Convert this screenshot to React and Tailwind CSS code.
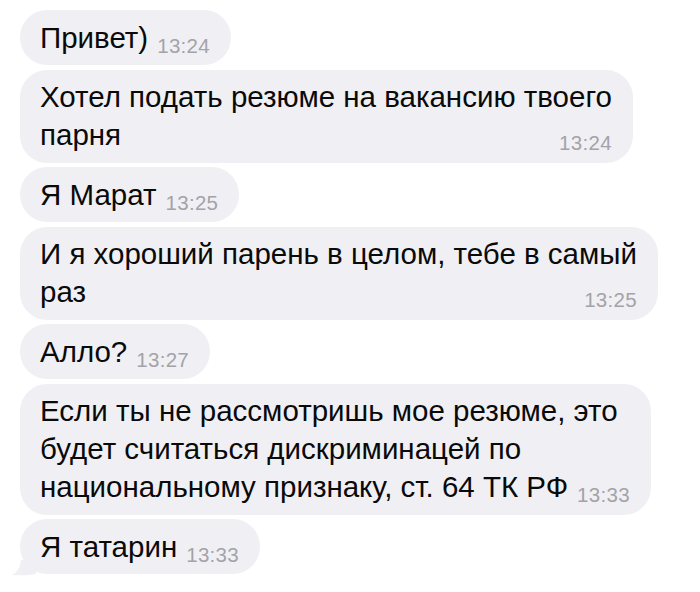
const MESSAGES = [
  { lines: ["Привет)"], time: "13:24" },
  { lines: ["Хотел подать резюме на вакансию твоего", "парня"], time: "13:24" },
  { lines: ["Я Марат"], time: "13:25" },
  { lines: ["И я хороший парень в целом, тебе в самый", "раз"], time: "13:25" },
  { lines: ["Алло?"], time: "13:27" },
  {
    lines: [
      "Если ты не рассмотришь мое резюме, это",
      "будет считаться дискриминацей по",
      "национальному признаку, ст. 64 ТК РФ",
    ],
    time: "13:33",
  },
  { lines: ["Я татарин"], time: "13:33", tail: true },
];

const Bubble = ({ lines, time, tail }) => {
  const last = lines.length - 1;
  return (
    <div className="relative w-fit rounded-[27px] bg-[#f0f0f4] pl-[20px] pr-[21px] py-[8.5px]">
      {lines.map((line, i) =>
        i < last ? (
          <div key={i} className="whitespace-nowrap">{line}</div>
        ) : (
          <div key={i} className="flex h-[38px] items-baseline justify-between gap-[9px] whitespace-nowrap">
            <span>{line}</span>
            <span className="translate-y-[5px] text-[20.5px] leading-[20px] tracking-[0.3px] text-[#a3a3a8]">{time}</span>
          </div>
        )
      )}
      {tail && (
        <svg className="absolute -left-[8px] -bottom-[2px]" width="24" height="16" viewBox="0 0 24 16">
          <path d="M24 0 L24 14 C16 15.5 6 15.5 0 15 C5 12.5 8 8 9 0 Z" fill="#f0f0f4" />
        </svg>
      )}
    </div>
  );
};

export default function App() {
  return (
    <div className="min-h-[592px] w-[700px] bg-white pl-[20px] pt-[10px] text-[29.5px] leading-[38px] text-[#0a0a0a] font-['Liberation_Sans',Arial,sans-serif]">
      <div className="flex flex-col items-start gap-[4.5px]">
        {MESSAGES.map((m, i) => (
          <Bubble key={i} {...m} />
        ))}
      </div>
    </div>
  );
}
